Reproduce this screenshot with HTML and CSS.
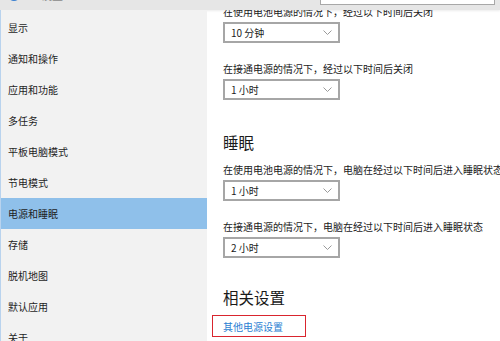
FILE: index.html
```html
<!DOCTYPE html>
<html>
<head>
    <meta charset="utf-8">
    <link rel="stylesheet" href="styles.css">
</head>
<body>
    <div class="window">
        <div class="titlebar">
            <div class="title-left">
                <svg class="gear" width="14" height="14" viewBox="0 0 14 14">
                    <circle cx="7" cy="7" r="5" fill="none" stroke="#3a7fd0" stroke-width="2.2"/>
                    <circle cx="7" cy="7" r="2" fill="#3a7fd0"/>
                </svg>
                <span class="title-text">设置</span>
            </div>
            <div class="search"></div>
        </div>

        <div class="main">
            <div class="sidebar">
                <div class="nav-item">显示</div>
                <div class="nav-item">通知和操作</div>
                <div class="nav-item">应用和功能</div>
                <div class="nav-item">多任务</div>
                <div class="nav-item">平板电脑模式</div>
                <div class="nav-item">节电模式</div>
                <div class="nav-item active">电源和睡眠</div>
                <div class="nav-item">存储</div>
                <div class="nav-item">脱机地图</div>
                <div class="nav-item">默认应用</div>
                <div class="nav-item">关于</div>
            </div>

            <div class="content">
                <div class="label first">在使用电池电源的情况下，经过以下时间后关闭</div>
                <div class="select"><span>10 分钟</span><svg class="chev" width="9" height="5" viewBox="0 0 9 5"><path d="M0.5 0.5 L4.5 4.5 L8.5 0.5" fill="none" stroke="#9a9a9a" stroke-width="1"/></svg></div>

                <div class="label">在接通电源的情况下，经过以下时间后关闭</div>
                <div class="select"><span>1 小时</span><svg class="chev" width="9" height="5" viewBox="0 0 9 5"><path d="M0.5 0.5 L4.5 4.5 L8.5 0.5" fill="none" stroke="#9a9a9a" stroke-width="1"/></svg></div>

                <h2 class="heading">睡眠</h2>

                <div class="label">在使用电池电源的情况下，电脑在经过以下时间后进入睡眠状态</div>
                <div class="select"><span>1 小时</span><svg class="chev" width="9" height="5" viewBox="0 0 9 5"><path d="M0.5 0.5 L4.5 4.5 L8.5 0.5" fill="none" stroke="#9a9a9a" stroke-width="1"/></svg></div>

                <div class="label">在接通电源的情况下，电脑在经过以下时间后进入睡眠状态</div>
                <div class="select"><span>2 小时</span><svg class="chev" width="9" height="5" viewBox="0 0 9 5"><path d="M0.5 0.5 L4.5 4.5 L8.5 0.5" fill="none" stroke="#9a9a9a" stroke-width="1"/></svg></div>

                <h2 class="heading related">相关设置</h2>

                <div class="link-box"><a class="link">其他电源设置</a></div>
            </div>
        </div>
    </div>
</body>
</html>
```

FILE: styles.css
```css
body {
    margin: 0;
    width: 500px;
    height: 341px;
    overflow: hidden;
    font-family: "Noto Sans CJK SC", "Noto Sans", sans-serif;
    color: #1a1a1a;
    background-color: #ffffff;
}

.window {
    height: 341px;
    display: flex;
    flex-direction: column;
}

.titlebar {
    height: 10px;
    flex-shrink: 0;
    overflow: hidden;
    background-color: #e6e6e6;
    display: flex;
    justify-content: space-between;
    align-items: flex-end;
    box-shadow: 0 1px 2px rgba(0,0,0,0.08);
}

.title-left {
    display: flex;
    align-items: center;
    gap: 20px;
    padding-left: 7px;
    margin-bottom: 7px;
}

.title-text {
    font-size: 11px;
    color: #8a8a8a;
}

.search {
    width: 173px;
    height: 20px;
    margin-right: 5px;
    margin-bottom: 5px;
    background-color: #ffffff;
    border: 1px solid #a8a8a8;
    border-top: none;
}

.main {
    flex: 1;
    display: flex;
    overflow: hidden;
}

.sidebar {
    width: 206px;
    flex-shrink: 0;
    background-color: #f2f2f2;
    border-left: 1px solid #b9d3ee;
    padding-top: 2px;
}

.nav-item {
    height: 31px;
    line-height: 31px;
    padding-left: 7px;
    font-size: 10px;
    color: #1e1e1e;
}

.nav-item.active {
    background-color: #8fc0ea;
}

.content {
    flex: 1;
    padding-left: 16px;
    overflow: hidden;
}

.label {
    font-size: 10px;
    line-height: 14px;
    height: 14px;
    white-space: nowrap;
    margin-bottom: 3px;
}

.label.first {
    margin-top: -5px;
}

.select {
    width: 113px;
    height: 17px;
    border: 2px solid #a6a6a6;
    display: flex;
    align-items: center;
    justify-content: space-between;
    padding: 0 6px 0 6px;
    box-sizing: content-box;
    width: 101px;
    font-size: 10px;
    margin-bottom: 19px;
}

.chev {
    display: block;
}

.heading {
    margin: 31px 0 10px 0;
    font-size: 15.5px;
    line-height: 22px;
    font-weight: normal;
    color: #1a1a1a;
}

.heading.related {
    margin-top: 28px;
    margin-bottom: 7px;
}

.link-box {
    width: 92px;
    height: 20px;
    margin-left: -11px;
    padding-left: 10px;
    border: 1.5px solid #d9252e;
    display: flex;
    align-items: center;
    box-sizing: content-box;
    width: 82px;
}

.link {
    font-size: 10px;
    color: #2b7fd3;
}
```
